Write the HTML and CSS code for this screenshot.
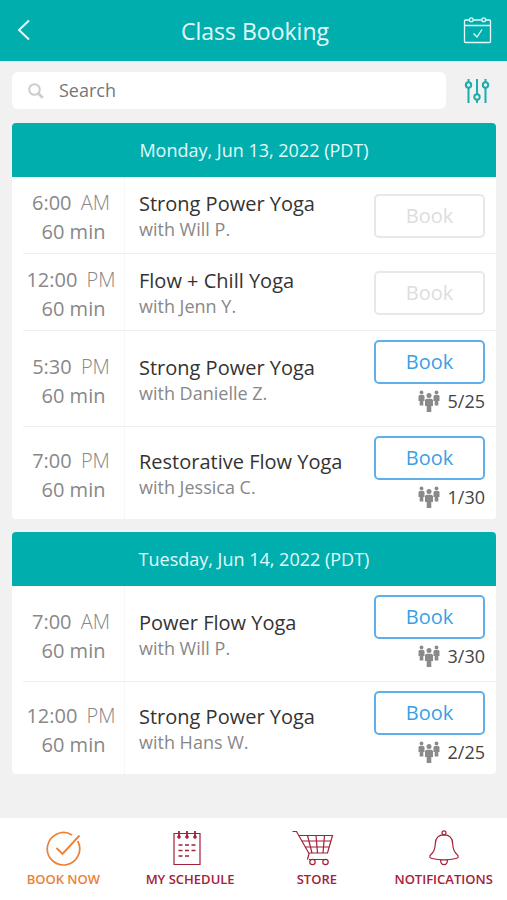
FILE: index.html
```html
<!DOCTYPE html>
<html lang="en">
<head>
<meta charset="utf-8">
<meta name="viewport" content="width=device-width, initial-scale=1">
<title>Class Booking</title>
<link rel="stylesheet" href="styles.css">
</head>
<body>
<svg class="defs" aria-hidden="true">
  <symbol id="people" viewBox="0 0 22 23">
    <circle cx="3.500" cy="2.500" r="1.900"/>
    <path d="M1.500 5h4l1 1v5H5.300v4.500H1.700V11H.5V6z"/>
    <circle cx="18.500" cy="2.500" r="1.900"/>
    <path d="M16.500 5h4l1 1v5h-1.200v4.500h-3.600V11h-1.200V6z"/>
    <circle cx="11" cy="5.500" r="2.500"/>
    <path d="M8.300 8.800h5.400l1.300 1.200v6h-1.700v6H8.700v-6H7v-6z"/>
  </symbol>
</svg>
<header class="topbar">
  <a class="topbar-link" href="#back" aria-label="Back">
    <svg width="14" height="22" viewBox="0 0 14 22" class="stroke-bold"><path d="M12 1.500 2 11l10 9.500"/></svg>
  </a>
  <h1>Class Booking</h1>
  <a class="topbar-link" href="#calendar" aria-label="Calendar">
    <svg width="29" height="28" viewBox="0 0 29 28" class="stroke"><path d="M6 4H2.500a1 1 0 0 0-1 1v20.500a1 1 0 0 0 1 1h24a1 1 0 0 0 1-1V5a1 1 0 0 0-1-1H23M10.500 4h8M1.500 9.500h26M10.500 17.500l3.500 3.500 5-7.500"/><circle cx="8.300" cy="3.700" r="1.900"/><circle cx="20.700" cy="3.700" r="1.900"/></svg>
  </a>
</header>
<main>
  <form class="search-row" role="search">
    <label class="search-box">
      <svg width="16" height="16" viewBox="0 0 16 16" class="search-icon"><circle cx="6.500" cy="6.500" r="5.300"/><path d="M10.500 10.500l4.200 4.200" stroke-width="2.800"/></svg>
      <input type="search" placeholder="Search" aria-label="Search">
    </label>
    <button class="filter" type="button" aria-label="Filters">
      <svg width="26" height="26" viewBox="0 0 26 26"><path d="M4.500 1v3M4.500 10v15M13 1v15M13 22v3M21.500 1v3M21.500 10v15"/><circle cx="4.500" cy="7" r="2.700"/><circle cx="13" cy="19" r="2.700"/><circle cx="21.500" cy="7" r="2.700"/></svg>
    </button>
  </form>

  <section class="day">
    <h2>Monday, Jun 13, 2022 (PDT)</h2>
    <ul>
      <li class="class-row">
        <div class="time"><span>6:00 <span class="meridiem">AM</span></span><span>60 min</span></div>
        <div class="info"><h3>Strong Power Yoga</h3><p>with Will P.</p></div>
        <div class="action"><button class="book" type="button" disabled>Book</button></div>
      </li>
      <li class="class-row">
        <div class="time"><span>12:00 <span class="meridiem">PM</span></span><span>60 min</span></div>
        <div class="info"><h3>Flow + Chill Yoga</h3><p>with Jenn Y.</p></div>
        <div class="action"><button class="book" type="button" disabled>Book</button></div>
      </li>
      <li class="class-row open">
        <div class="time"><span>5:30 <span class="meridiem">PM</span></span><span>60 min</span></div>
        <div class="info"><h3>Strong Power Yoga</h3><p>with Danielle Z.</p></div>
        <div class="action"><button class="book" type="button">Book</button><div class="spots"><svg><use href="#people"/></svg>5/25</div></div>
      </li>
      <li class="class-row open">
        <div class="time"><span>7:00 <span class="meridiem">PM</span></span><span>60 min</span></div>
        <div class="info"><h3>Restorative Flow Yoga</h3><p>with Jessica C.</p></div>
        <div class="action"><button class="book" type="button">Book</button><div class="spots"><svg><use href="#people"/></svg>1/30</div></div>
      </li>
    </ul>
  </section>

  <section class="day">
    <h2>Tuesday, Jun 14, 2022 (PDT)</h2>
    <ul>
      <li class="class-row open">
        <div class="time"><span>7:00 <span class="meridiem">AM</span></span><span>60 min</span></div>
        <div class="info"><h3>Power Flow Yoga</h3><p>with Will P.</p></div>
        <div class="action"><button class="book" type="button">Book</button><div class="spots"><svg><use href="#people"/></svg>3/30</div></div>
      </li>
      <li class="class-row open">
        <div class="time"><span>12:00 <span class="meridiem">PM</span></span><span>60 min</span></div>
        <div class="info"><h3>Strong Power Yoga</h3><p>with Hans W.</p></div>
        <div class="action"><button class="book" type="button">Book</button><div class="spots"><svg><use href="#people"/></svg>2/25</div></div>
      </li>
    </ul>
  </section>
</main>
<nav class="tabs">
  <a class="tab active" href="#book">
    <svg width="36" height="36" viewBox="0 0 36 36"><path d="M27 5a16.200 16.200 0 1 0 5.700 6" stroke-width="1.700"/><path d="M11.500 18l6 6L34.500 5.500" stroke-width="1.900"/></svg>
    BOOK NOW
  </a>
  <a class="tab" href="#schedule">
    <svg width="42" height="36" viewBox="0 0 42 36"><path d="M5 3.500h26v31H5z"/><path d="M10 1v5M18 1v5M26 1v5" stroke-width="1.800"/><g fill="currentColor"><circle cx="10" cy="7" r="1.200"/><circle cx="18" cy="7" r="1.200"/><circle cx="26" cy="7" r="1.200"/></g><path d="M9.500 15h4M16 15h4M22.500 15h4M9.500 20.500h4M16 20.500h4M22.500 20.500h4M9.500 26h4M16 26h4" stroke-width="1.600"/></svg>
    MY SCHEDULE
  </a>
  <a class="tab" href="#store">
    <svg width="50" height="36" viewBox="0 0 50 36"><path d="M.5 1.500h4L17 23.500l-1.500 6M6.500 5.500h34L35.500 23H17M9.500 11h29.300M13 17h24M15.500 5.500 20 23M24 5.500l1.500 17.500M32.500 5.500 31 23M17 29.500h16.500"/><circle cx="20.500" cy="32" r="2.700"/><circle cx="33.500" cy="32" r="2.700"/></svg>
    STORE
  </a>
  <a class="tab" href="#notifications">
    <svg width="36" height="36" viewBox="0 0 36 36"><circle cx="18" cy="2.800" r="2"/><path d="M18 4.800c-5.500 0-8.500 3.500-8.700 9-.2 5-.8 8-4.300 10.700-2 1.500-1.500 3.500 1 4 7 1.500 17 1.500 24 0 2.500-.5 3-2.500 1-4-3.500-2.700-4.100-5.700-4.300-10.700-.2-5.500-3.200-9-8.700-9zM14.500 29.700c0 6.500 7 6.500 7 0"/></svg>
    NOTIFICATIONS
  </a>
</nav>
</body>
</html>
```
FILE: styles.css
```css
* {
  box-sizing: border-box;
}

body {
  margin: 0;
  min-height: 100vh;
  display: flex;
  flex-direction: column;
  background: #f1f1f1;
  color: #333;
  font-family: "Open Sans", "Noto Sans", sans-serif;
}

h1, h2, h3, p, ul {
  margin: 0;
  padding: 0;
  font-weight: 400;
}

svg {
  display: block;
  flex: none;
}

button, input {
  font: inherit;
}

.defs {
  position: absolute;
  width: 0;
  height: 0;
}

.topbar {
  display: flex;
  align-items: flex-start;
  justify-content: space-between;
  padding: 15px 14px 14px 17px;
  background: #00aeae;
  color: #e2fbfa;
}

.topbar h1 {
  font-size: 23px;
  line-height: 32px;
}

.topbar-link {
  display: flex;
  align-items: center;
  width: 30px;
  height: 30px;
  color: inherit;
}

.topbar svg {
  fill: none;
  stroke: currentColor;
}

.stroke {
  stroke-width: 1.3;
}

.stroke-bold {
  stroke-width: 2;
}

main {
  flex: 1;
  padding: 11px 11px 0 12px;
}

.search-row {
  display: flex;
  align-items: center;
  gap: 18px;
  margin-bottom: 14px;
}

.search-box {
  display: flex;
  flex: 1;
  align-items: center;
  gap: 15px;
  height: 37px;
  padding: 0 16px;
  border-radius: 6px;
  background: #fff;
}

.search-icon {
  fill: none;
  stroke: #ccc;
  stroke-width: 2;
}

.search-box input {
  flex: 1;
  min-width: 0;
  padding: 0 0 2px;
  border: 0;
  outline: 0;
  background: none;
  color: #777;
  font-size: 18px;
}

.search-box input::placeholder {
  color: #777;
  opacity: 1;
}

.filter {
  padding: 0;
  border: 0;
  background: none;
  color: #1cacab;
  margin-right: 6px;
}

.filter svg {
  fill: none;
  stroke: currentColor;
  stroke-width: 2;
}

.day {
  overflow: hidden;
  margin-bottom: 13px;
  border-radius: 4px;
  background: #fff;
}

.day h2 {
  padding: 15px 0 14px;
  background: #00aeae;
  color: #e2fbfa;
  font-size: 18px;
  line-height: 25px;
  text-align: center;
}

.day ul {
  padding-left: 11px;
  list-style: none;
}

.class-row {
  display: grid;
  grid-template-columns: 102px 1fr auto;
  min-height: 77px;
  border-bottom: 1px solid #eee;
}

.class-row.open {
  min-height: 96px;
}

.class-row:last-child {
  min-height: 92px;
  border-bottom: 0;
}

.time, .info, .action {
  display: flex;
  flex-direction: column;
  justify-content: center;
}

.time {
  align-items: center;
  padding-top: 4px;
  border-right: 1px solid #f7f7f7;
  color: #888;
  font-size: 20px;
  line-height: 29px;
}

.meridiem {
  margin: 0 5px 0 4px;
  font-weight: 300;
}

.info {
  padding: 2px 0 0 14px;
}

.info h3 {
  font-size: 20px;
  line-height: 26px;
}

.info p {
  color: #888;
  font-size: 18px;
  line-height: 24px;
}

.action {
  padding: 9px 11px 8px;
}

.open .action {
  justify-content: flex-start;
}

.book {
  width: 111px;
  height: 44px;
  padding: 0 0 1px;
  border: 2px solid #5fb0ea;
  border-radius: 5px;
  background: #fff;
  color: #3a9fe5;
  font-size: 20px;
}

.book:disabled {
  border-color: #e8e8e8;
  color: #ddd;
}

.spots {
  display: flex;
  align-items: center;
  justify-content: flex-end;
  gap: 8px;
  padding-top: 3px;
  color: #444;
  font-size: 18px;
  line-height: 28px;
}

.spots svg {
  width: 22px;
  height: 23px;
  fill: #8a8a8a;
}

.tabs {
  display: grid;
  grid-template-columns: repeat(4, 1fr);
  height: 82px;
  padding-top: 12px;
  background: #fff;
}

.tab {
  display: flex;
  flex-direction: column;
  align-items: center;
  gap: 4px;
  color: #a3213a;
  font-size: 13px;
  font-weight: 600;
  line-height: 18px;
  text-decoration: none;
}

.tab.active {
  color: #ee8034;
}

.tab svg {
  fill: none;
  stroke: currentColor;
  stroke-width: 1.2;
}
```
